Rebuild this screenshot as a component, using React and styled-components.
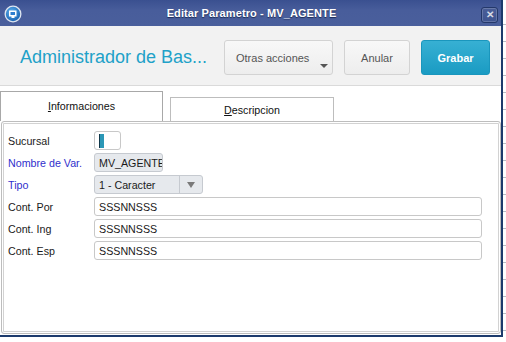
import React from "react";
import styled, { createGlobalStyle } from "styled-components";

const Global = createGlobalStyle`
  html, body { margin: 0; padding: 0; background: #ffffff; overflow: hidden; }
  * { box-sizing: border-box; }
`;

const Screen = styled.div`
  width: 506px;
  height: 342px;
  display: flex;
  align-items: flex-start;
  background: #ffffff;
  font-family: "Liberation Sans", Arial, sans-serif;
`;

const Window = styled.div`
  width: 503px;
  height: 337px;
  display: flex;
  flex-direction: column;
  border-right: 2px solid #1c3a6c;
  border-bottom: 2px solid #1c3a6c;
  background: #ffffff;
`;

const BackStrip = styled.div`
  width: 3px;
  height: 337px;
  background: repeating-linear-gradient(
    to bottom,
    #ffffff 0px,
    #ffffff 16px,
    #b8bcc4 16px,
    #b8bcc4 17px
  );
  background-position: 0 8px;
`;

const TitleBar = styled.div`
  height: 26px;
  flex: none;
  display: flex;
  align-items: center;
  padding: 0 3px 0 4px;
  background: linear-gradient(#3a5090, #485d9b 40%, #4a5f9c);
`;

const TitleText = styled.div`
  flex: 1;
  text-align: center;
  color: #ffffff;
  font-weight: bold;
  font-size: 11px;
  text-shadow: 0 1px 1px #1b2a55;
  letter-spacing: 0.1px;
`;

const CloseButton = styled.div`
  width: 17px;
  height: 16px;
  margin-top: 3px;
  border: 1px solid #24386a;
  border-radius: 3px;
  box-shadow: inset 0 0 0 1px rgba(255, 255, 255, 0.18);
  background: linear-gradient(#4a5e98, #3f5490);
  display: flex;
  align-items: center;
  justify-content: center;
  color: #d8dce6;
  font-size: 10px;
  font-weight: bold;
  line-height: 1;
`;

const Header = styled.div`
  height: 60px;
  flex: none;
  display: flex;
  align-items: center;
  padding: 4px 11px 0 20px;
  background: #f2f2f2;
  border-bottom: 1px solid #dadada;
`;

const AppTitle = styled.div`
  flex: 1;
  font-size: 18px;
  color: #21a1c8;
  white-space: nowrap;
`;

const Actions = styled.div`
  display: flex;
  gap: 11px;
`;

const Button = styled.div`
  position: relative;
  height: 35px;
  width: ${(p) => p.$w}px;
  display: flex;
  align-items: center;
  justify-content: ${(p) => (p.$left ? "flex-start" : "center")};
  padding-left: ${(p) => (p.$left ? "11px" : "0")};
  border-radius: 3px;
  font-size: 11px;
  border: 1px solid ${(p) => (p.$primary ? "#1a96bd" : "#d3d3d3")};
  background: ${(p) =>
    p.$primary
      ? "linear-gradient(#37b0d3, #1a9bc3)"
      : "linear-gradient(#f8f8f8, #ededed)"};
  color: ${(p) => (p.$primary ? "#ffffff" : "#555555")};
  font-weight: ${(p) => (p.$primary ? "bold" : "normal")};
`;

const Caret = styled.span`
  position: absolute;
  right: 4px;
  bottom: 6px;
  width: 0;
  height: 0;
  border-left: 4px solid transparent;
  border-right: 4px solid transparent;
  border-top: 4px solid #555;
`;

const Body = styled.div`
  flex: 1;
  display: flex;
  flex-direction: column;
`;

const TabRow = styled.div`
  height: 35px;
  flex: none;
  display: flex;
  align-items: flex-end;
  gap: 7px;
`;

const Tab = styled.div`
  width: ${(p) => (p.$active ? 163 : 164)}px;
  height: ${(p) => (p.$active ? 30 : 24)}px;
  border: 1px solid ${(p) => (p.$active ? "#a8a8a8" : "#bdbdbd")};
  border-bottom: none;
  background: #ffffff;
  display: flex;
  align-items: center;
  justify-content: center;
  font-size: 10.7px;
  color: #111;
  padding-bottom: ${(p) => (p.$active ? 1 : 0)}px;
`;

const Panel = styled.div`
  flex: 1;
  margin: 0 0 1px 1px;
  border: 1px solid #bdbdbd;
  border-radius: 3px;
  box-shadow: inset 0 0 0 1px #ffffff, inset 0 0 0 2px #d2d2d2;
  background: #ffffff;
  padding: 9px 18px 0 6px;
`;

const Form = styled.div`
  display: grid;
  grid-template-columns: 86px 1fr;
  grid-auto-rows: 19px;
  row-gap: 3px;
  align-items: center;
`;

const Label = styled.div`
  font-size: 10.7px;
  color: ${(p) => (p.$required ? "#3030cc" : "#1a1a1a")};
  white-space: nowrap;
`;

const Field = styled.div`
  height: 19px;
  width: ${(p) => (p.$w ? `${p.$w}px` : "100%")};
  border: 1px solid ${(p) => (p.$disabled ? "#c6cad0" : "#c8c8c8")};
  border-radius: 3px;
  background: ${(p) => (p.$disabled ? "#e6e9ed" : "#ffffff")};
  display: flex;
  align-items: center;
  padding-left: 4px;
  font-size: 10.7px;
  color: #1a1a1a;
  overflow: hidden;
  white-space: nowrap;
`;

const Cursor = styled.span`
  width: 5px;
  height: 14px;
  background: #2b97b6;
  border-left: 1px solid #10384a;
`;

const SelectValue = styled.span`
  flex: 1;
`;

const SelectButton = styled.span`
  width: 23px;
  height: 100%;
  border-left: 1px solid #c6cad0;
  display: flex;
  align-items: center;
  justify-content: center;
`;

const SelectArrow = styled.span`
  width: 0;
  height: 0;
  border-left: 4px solid transparent;
  border-right: 4px solid transparent;
  border-top: 6px solid #7a7a7a;
`;

function AppIcon() {
  return (
    <svg width="18" height="18" viewBox="0 0 18 18" style={{ marginTop: 2 }}>
      <defs>
        <radialGradient id="ig" cx="40%" cy="35%" r="70%">
          <stop offset="0%" stopColor="#5fb2ee" />
          <stop offset="100%" stopColor="#1660b0" />
        </radialGradient>
      </defs>
      <circle cx="9" cy="9" r="8.5" fill="#dfe6f0" />
      <circle cx="9" cy="9" r="7.2" fill="url(#ig)" />
      <path d="M5 5.5 H12.5 V11.5 H10.5 V13 H7.5 V11.5 H5 Z" fill="#ffffff" />
      <rect x="6.5" y="7" width="4.5" height="3" fill="#2f7fcf" />
    </svg>
  );
}

export default function App() {
  return (
    <>
      <Global />
      <Screen>
        <Window>
          <TitleBar>
            <AppIcon />
            <TitleText>Editar Parametro - MV_AGENTE</TitleText>
            <CloseButton>✕</CloseButton>
          </TitleBar>
          <Header>
            <AppTitle>Administrador de Bas...</AppTitle>
            <Actions>
              <Button $w={109} $left>
                Otras acciones
                <Caret />
              </Button>
              <Button $w={66}>Anular</Button>
              <Button $w={69} $primary>
                Grabar
              </Button>
            </Actions>
          </Header>
          <Body>
            <TabRow>
              <Tab $active>
                <span>
                  <u>I</u>nformaciones
                </span>
              </Tab>
              <Tab>
                <span>
                  <u>D</u>escripcion
                </span>
              </Tab>
            </TabRow>
            <Panel>
              <Form>
                <Label>Sucursal</Label>
                <Field $w={27}>
                  <Cursor />
                </Field>
                <Label $required>Nombre de Var.</Label>
                <Field $w={69} $disabled>
                  MV_AGENTE
                </Field>
                <Label $required>Tipo</Label>
                <Field $w={109} $disabled style={{ paddingRight: 0 }}>
                  <SelectValue>1 - Caracter</SelectValue>
                  <SelectButton>
                    <SelectArrow />
                  </SelectButton>
                </Field>
                <Label>Cont. Por</Label>
                <Field>SSSNNSSS</Field>
                <Label>Cont. Ing</Label>
                <Field>SSSNNSSS</Field>
                <Label>Cont. Esp</Label>
                <Field>SSSNNSSS</Field>
              </Form>
            </Panel>
          </Body>
        </Window>
        <BackStrip />
      </Screen>
    </>
  );
}
